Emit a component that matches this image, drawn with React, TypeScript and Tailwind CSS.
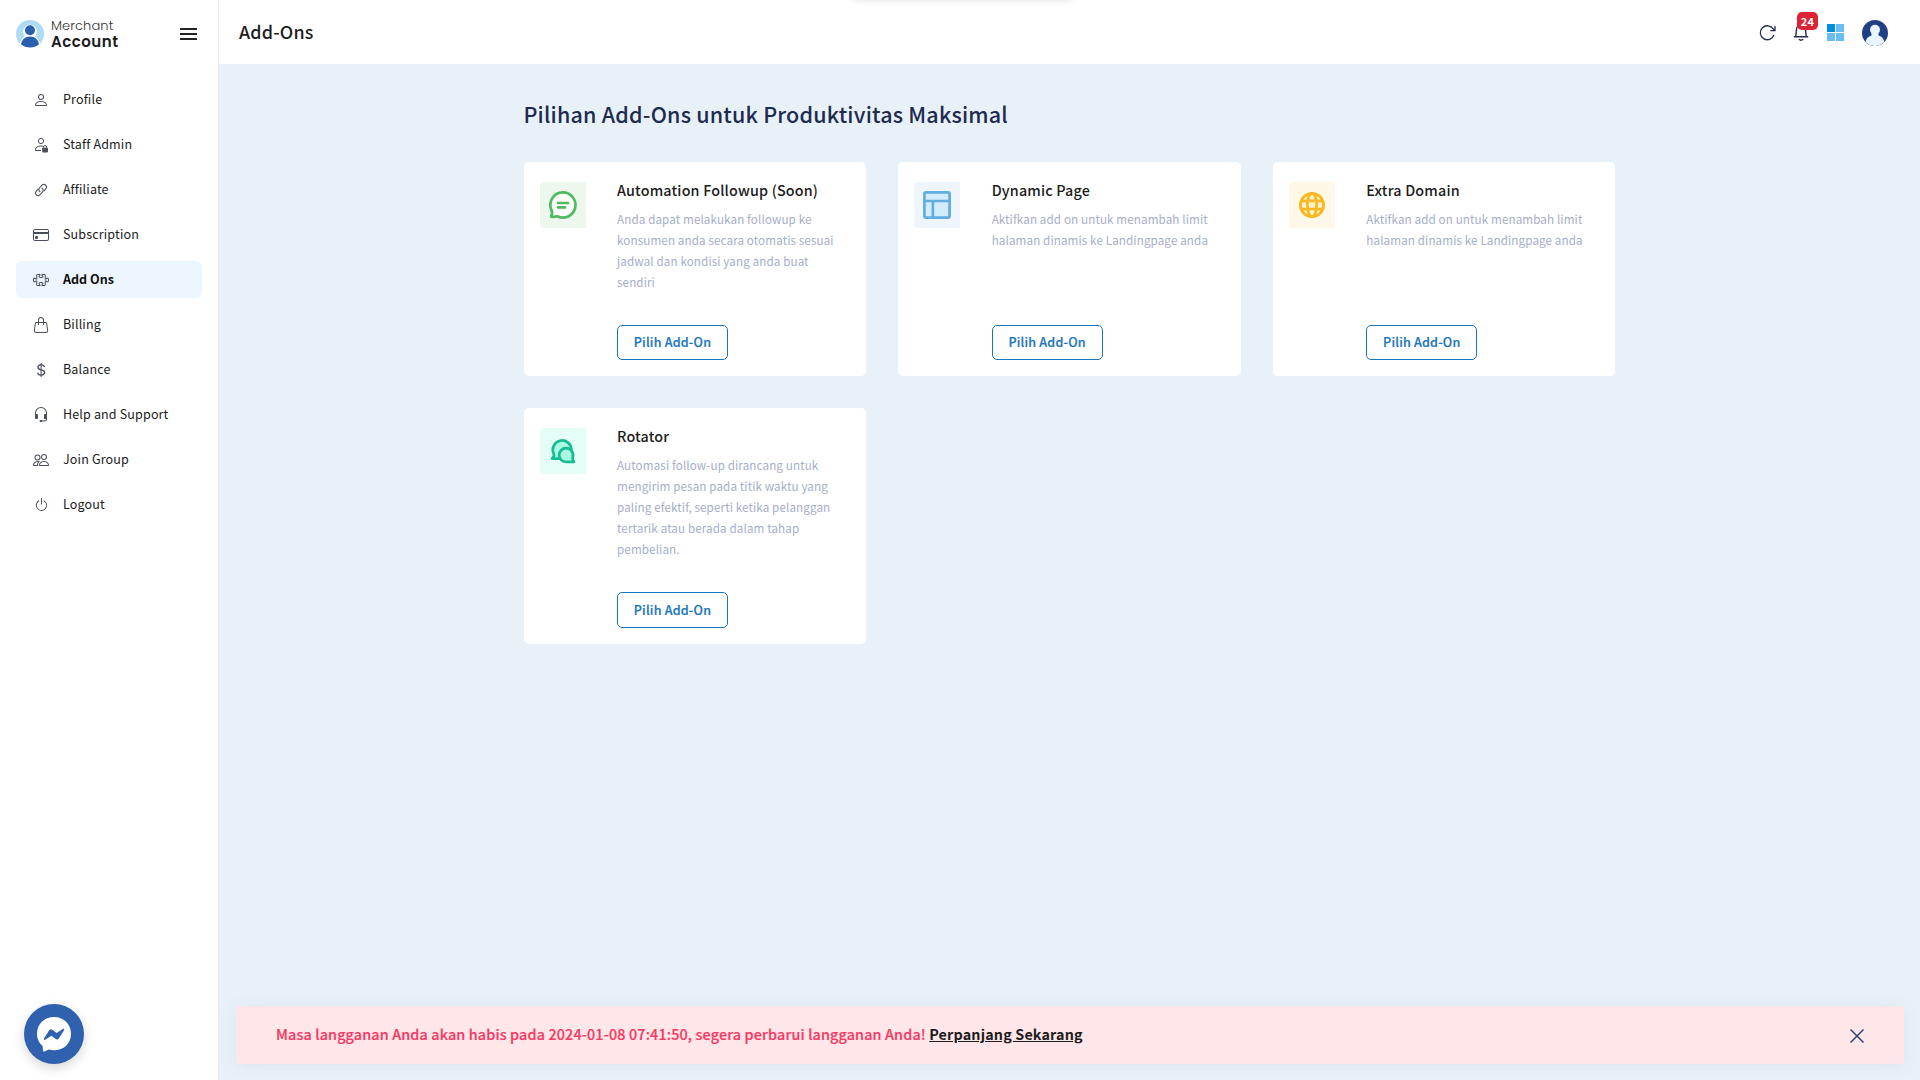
import type { ReactNode } from "react";
import {
  BsPerson, BsCreditCard, BsPuzzle, BsHandbag, BsCurrencyDollar,
  BsHeadset, BsPeople, BsPower,
} from "react-icons/bs";

function StaffIcon() {
  return (
    <svg width="16" height="16" viewBox="0 0 16 16" fill="none" stroke="currentColor">
      <circle cx="8" cy="4" r="2.6" />
      <path d="M8 13.500H2.500V12.300C2.500 10.500 4.500 9 8 9C9 9 9.700 9.100 10.300 9.300" />
      <path d="M10.300 11V10.300A1.700 1.700 0 0 1 13.700 10.300V11" />
      <rect x="9.200" y="10.800" width="5.800" height="4.600" rx=".8" fill="currentColor" stroke="none" />
    </svg>
  );
}

function LinkIcon() {
  return (
    <svg width="14" height="14" viewBox="0 0 14 14" fill="none" stroke="currentColor" strokeWidth="1.100" strokeLinecap="round">
      <path d="M6 8.800A2.600 2.600 0 0 1 5.400 5L7.800 2.300A2.600 2.600 0 0 1 11.800 5.700L10 7.800" />
      <path d="M8 5.200A2.600 2.600 0 0 1 8.600 9L6.200 11.700A2.600 2.600 0 0 1 2.200 8.300L4 6.200" />
    </svg>
  );
}

const menu: { label: string; icon: ReactNode; active?: boolean }[] = [
  { label: "Profile", icon: <BsPerson size={16} /> },
  { label: "Staff Admin", icon: <StaffIcon /> },
  { label: "Affiliate", icon: <LinkIcon /> },
  { label: "Subscription", icon: <BsCreditCard size={16} /> },
  { label: "Add Ons", icon: <BsPuzzle size={16} />, active: true },
  { label: "Billing", icon: <BsHandbag size={16} /> },
  { label: "Balance", icon: <BsCurrencyDollar size={16} /> },
  { label: "Help and Support", icon: <BsHeadset size={16} /> },
  { label: "Join Group", icon: <BsPeople size={16} /> },
  { label: "Logout", icon: <BsPower size={15} /> },
];

const cards = [
  {
    title: "Automation Followup (Soon)",
    text: "Anda dapat melakukan followup ke konsumen anda secara otomatis sesuai jadwal dan kondisi yang anda buat sendiri",
    tile: "bg-[#edf7ee]",
    button: "h-[35.500px]",
    icon: (
      <svg width="46" height="46" viewBox="0 0 46 46" fill="none" stroke="#4fba5f" strokeWidth="2.700" strokeLinecap="round" strokeLinejoin="round">
        <path fill="#fff" d="M23 10.400A12.600 12.600 0 1 1 17.300 34.300C15.500 34 13.500 35.300 11.500 34.800C10.900 34.500 11.200 33.700 11.500 33.200C12.500 31.500 12.200 29.500 11.400 28A12.600 12.600 0 0 1 23 10.400Z" />
        <path strokeWidth="2.700" d="M18 21H28M18 25.400H25" />
      </svg>
    ),
  },
  {
    title: "Dynamic Page",
    text: "Aktifkan add on untuk menambah limit halaman dinamis ke Landingpage anda",
    tile: "bg-[#eff5fd]",
    button: "h-[35.500px]",
    icon: (
      <svg width="46" height="46" viewBox="0 0 46 46" fill="#d3ecff" stroke="#62ade0" strokeWidth="2.700">
        <rect x="10.400" y="10.400" width="25.200" height="25.200" rx="1.500" />
        <path d="M10 19H36M18.900 19V36" />
      </svg>
    ),
  },
  {
    title: "Extra Domain",
    text: "Aktifkan add on untuk menambah limit halaman dinamis ke Landingpage anda",
    tile: "bg-[#fff8e9]",
    button: "h-[35.500px]",
    icon: (
      <svg width="46" height="46" viewBox="0 0 46 46" fill="none" stroke="#f7b924" strokeWidth="2.800">
        <circle cx="23" cy="23" r="11.600" fill="#fff1c9" />
        <ellipse cx="23" cy="23" rx="4.700" ry="11.600" />
        <path d="M12.500 18.900H33.500M12.500 27.100H33.500" />
      </svg>
    ),
  },
  {
    title: "Rotator",
    text: "Automasi follow-up dirancang untuk mengirim pesan pada titik waktu yang paling efektif, seperti ketika pelanggan tertarik atau berada dalam tahap pembelian.",
    tile: "bg-[#e4fef7]",
    button: "h-[36.300px]",
    icon: (
      <svg width="46" height="46" viewBox="0 0 46 46" fill="#abfae2" stroke="#16bd91" strokeWidth="2.700" strokeLinecap="round" strokeLinejoin="round">
        <path d="M21 30.600H12C13.500 29.500 14.200 27.500 13.800 26A9.300 9.300 0 1 1 31.400 22" />
        <path d="M26 20.200A7 7 0 0 1 32.700 29.500C32.400 31.500 33 33 34 33.900H26A6.850 6.850 0 0 1 26 20.200Z" />
      </svg>
    ),
  },
];

export default function App() {
  return (
    <div className="relative flex h-[1080px] w-[1920px] overflow-hidden bg-[#e9f1f8] font-['Noto_Sans_CJK_JP','Noto_Sans',sans-serif] tracking-[0.012em] text-[#1c1c1c]">
      <aside className="flex w-[219px] shrink-0 flex-col border-r border-[#e8ebef] bg-white">
        <div className="flex h-16 items-center pr-[21.500px] pl-4 pt-1">
          <svg width="28" height="28" viewBox="0 0 28 28">
            <circle cx="14" cy="14" r="14" fill="#aedbf7" />
            <path d="M3.500 28C3.500 20 7 17.500 9 16.500A7 7 0 1 1 19 16.500C21 17.500 24.500 20 24.500 28Z" fill="#fff" />
            <circle cx="14" cy="10.300" r="5" fill="#2860ae" />
            <path d="M5 24.300C6 19.500 9 16.500 14 16.500S22 19.500 23 24.300A14 14 0 0 1 5 24.300Z" fill="#2860ae" />
          </svg>
          <div className="ml-[7px] flex-1 font-[Poppins,Inter,sans-serif]">
            <div className="text-[13px] leading-4 font-light tracking-[0.100px] text-[#333]">Merchant</div>
            <div className="text-[15px] leading-4 font-semibold tracking-[0.500px]">Account</div>
          </div>
          <div className="flex w-[17px] flex-col gap-[3px]">
            <span className="h-[2px] bg-[#222]" />
            <span className="h-[2px] bg-[#222]" />
            <span className="h-[2px] bg-[#222]" />
          </div>
        </div>
        <nav className="mt-[17px] flex flex-col gap-2 px-4">
          {menu.map((m) => (
            <div key={m.label} className={`flex h-[37px] items-center rounded-md ${m.active ? "bg-[#edf6fe] font-bold text-[#111]" : ""}`}>
              <span className="ml-[17px] mr-[14px] flex w-4 justify-center text-[#4b4f5a]">{m.icon}</span>
              <span className={`pb-[2px] text-[12.540px] leading-5 ${m.active ? "tracking-normal" : "tracking-[0.011em]"}`}>{m.label}</span>
            </div>
          ))}
        </nav>
      </aside>

      <div className="flex flex-1 flex-col">
        <header className="flex h-16 items-center bg-white pr-8 pl-5">
          <h1 className="flex-1 pb-[2px] text-[17.900px] font-medium">Add-Ons</h1>
          <svg className="mt-[2px]" width="18" height="18" viewBox="0 0 18 18" fill="none" stroke="#222e4d" strokeWidth="1.300">
            <path d="M15 11A7 7 0 1 1 14.300 5L15.800 6.500M16 2V6.700H11.300" />
          </svg>
          <div className="relative ml-4 h-5 w-4">
            <svg width="16" height="20" viewBox="0 0 16 20" fill="none" stroke="#222e4d" strokeWidth="1.400">
              <path d="M.8 14.800H15.200M2.700 14.800L3.500 7.500A4.500 4.500 0 0 1 12.500 7.500L13.300 14.800M5.800 17.300Q8 19.200 10.200 17.300" />
            </svg>
            <span className="absolute -top-[10px] left-[4px] flex h-[18px] w-[21px] items-center justify-center rounded-[5px] bg-[#dc2435] text-[11px] font-bold text-white">24</span>
          </div>
          <div className="ml-[18px] mt-px grid grid-cols-[8px_8px] grid-rows-[8px_8px] gap-[1px]">
            <span className="bg-[#008fe5]" />
            <span className="bg-[#68bdf3]" />
            <span className="bg-[#68bdf3]" />
            <span className="bg-[#68bdf3]" />
          </div>
          <svg className="mt-px ml-[18px]" width="26" height="26" viewBox="0 0 26 26">
            <circle cx="13" cy="13" r="13" fill="#213f85" />
            <circle cx="13" cy="9.800" r="5" fill="#e8f4ff" />
            <path d="M9.500 12H16.500V15.500C20 16.500 21.500 18 22.300 22.100A13 13 0 0 1 3.700 22.100C4.500 18 6 16.500 9.500 15.500Z" fill="#e8f4ff" />
          </svg>
        </header>

        <main className="ml-[304.500px] w-[1092px]">
          <h2 className="mt-[32px] text-[21.500px] leading-9 font-medium text-[#1d2b4f]">Pilihan Add-Ons untuk Produktivitas Maksimal</h2>
          <div className="mt-[30px] grid grid-cols-3 gap-x-8 gap-y-[32.200px]">
            {cards.map((c) => (
              <section key={c.title} className="flex rounded-[5px] bg-white px-4 pt-5 pb-4">
                <div className={`size-[46px] shrink-0 overflow-hidden rounded-l-[4px] ${c.tile}`}>{c.icon}</div>
                <div className="ml-[31.500px] flex flex-1 flex-col items-start">
                  <h3 className="-mt-[4px] text-[14.330px] leading-6 font-medium tracking-[0.012em]">{c.title}</h3>
                  <p className="mt-[7px] mb-8 w-[226px] text-[11.640px] leading-[20.900px] tracking-[0.0105em] text-[#a5aec9]">{c.text}</p>
                  <button className={`mt-auto flex w-[111px] items-center justify-center rounded-[5px] border border-[#1b75bc] text-[12.540px] font-medium tracking-[0.016em] text-[#1b75bc] [-webkit-text-stroke:0.200px_#1b75bc] ${c.button}`}>Pilih Add-On</button>
                </div>
              </section>
            ))}
          </div>
        </main>
      </div>

      <div className="absolute top-[-20px] left-[850px] h-5 w-[224px] rounded-b-lg shadow-[0_1px_7px_rgba(0,0,0,0.1)]" />

      <div className="absolute top-[1006px] left-[236px] flex h-[58px] w-[1668px] items-center rounded-[4px] bg-[#ffe6e9] pr-10 pl-10 shadow-[0_2px_18px_rgba(60,80,110,0.08)]">
        <p className="flex-1 pb-[2px] text-[14.330px] font-medium tracking-[0.011em] text-[#f43a64] [-webkit-text-stroke:0.200px_#f43a64]">
          Masa langganan Anda akan habis pada 2024-01-08 07:41:50, segera perbarui langganan Anda!{" "}
          <a className="font-bold text-[#1c1c1c] underline [-webkit-text-stroke:0]">Perpanjang Sekarang</a>
        </p>
        <svg className="mt-px" width="14" height="14" viewBox="0 0 14 14" stroke="#2c4570" strokeWidth="1.500">
          <path d="M.5.5L13.500 13.500M13.500.5L.5 13.500" />
        </svg>
      </div>

      <div className="absolute top-[1004px] left-6 flex size-[60px] items-center justify-center rounded-full bg-[#2f61ae] shadow-[0_4px_12px_rgba(0,0,0,0.16)]">
        <svg width="34" height="35" viewBox="0 0 34 35">
          <path fill="#fff" d="M17 0C26.800 0 34 7 34 16.700S26.800 33.300 17 33.300C15 33.300 13.300 33 12 32.600C9.800 32.800 8.500 35 6.500 34.500C5.500 34 6.200 31 5.500 29C2 26 0 22 0 16.700C0 7 7.200 0 17 0Z" />
          <path fill="#2f61ae" d="M7 21.500L12 13.600A2.500 2.500 0 0 1 15.600 13L19.600 16L25.800 12C26.700 11.400 27.600 12.200 27 13.200L22 21.200A2.500 2.500 0 0 1 18.400 21.800L14.400 18.800L8.200 22.800C7.300 23.300 6.400 22.500 7 21.500Z" />
        </svg>
      </div>
    </div>
  );
}
